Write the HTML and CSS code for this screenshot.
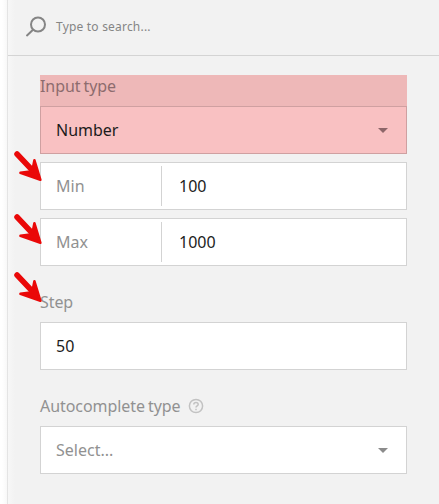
FILE: index.html
```
<!DOCTYPE html>
<html lang="en">
<head>
<meta charset="utf-8">
<title>Input settings</title>
<link rel="stylesheet" href="styles.css">
</head>
<body>
<main class="panel">
  <header class="search">
    <svg class="search-icon" width="22" height="22" viewBox="0 0 22 22"><circle cx="13" cy="8.5" r="7"/><path d="M8 13.7L2 19.4"/></svg>
    <span class="search-text">Type to search...</span>
  </header>
  <form class="fields">
    <section class="highlight">
      <div class="label">Input type</div>
      <div class="box select"><span>Number</span><i class="caret"></i></div>
    </section>
    <div class="box pair">
      <span class="name">Min</span><span class="value">100</span>
      <svg class="arrow" width="30" height="34" viewBox="0 0 30 34"><use href="#arrow"/></svg>
    </div>
    <div class="box pair">
      <span class="name">Max</span><span class="value">1000</span>
      <svg class="arrow arrow-low" width="30" height="34" viewBox="0 0 30 34"><use href="#arrow"/></svg>
    </div>
    <section class="group">
      <div class="label">Step
        <svg class="arrow arrow-label" width="30" height="34" viewBox="0 0 30 34"><use href="#arrow"/></svg>
      </div>
      <div class="box">50</div>
    </section>
    <section class="group">
      <div class="label">Autocomplete type
        <svg class="help" width="16" height="16" viewBox="0 0 16 16"><circle cx="8" cy="8" r="6.6"/><path d="M5.8 6.5C5.8 3.7 10.2 3.7 10.2 6.4C10.2 7.9 8 7.8 8 9.6M8 10.8V12.2"/></svg>
      </div>
      <div class="box select empty"><span>Select...</span><i class="caret"></i></div>
    </section>
  </form>
</main>
<svg class="defs" width="0" height="0"><defs><g id="arrow"><path class="shaft" d="M4 4L20.5 21.5"/><path class="head" d="M21.4 10.2L27.4 29.8L7.4 22.8L19.2 21.2Z"/></g></defs></svg>
</body>
</html>
```
FILE: styles.css
```
* { box-sizing: border-box; }
body {
  margin: 0;
  height: 504px;
  overflow: hidden;
  padding-left: 7px;
  background: linear-gradient(to right, #fff 2px, #f8f8f8 7px);
  font: 16px/24px "Noto Sans", "Open Sans", sans-serif;
  color: #1c1c1c;
}
.panel {
  height: 504px;
  border-left: 1px solid #e4e4e4;
  background: linear-gradient(to right, #f7f7f7, #f2f2f2 7px);
}
.search {
  display: flex;
  align-items: center;
  height: 56px;
  padding: 0 0 2px 17px;
  border-bottom: 1px solid #d4d4d4;
}
.search-icon { fill: none; stroke: #858585; stroke-width: 2; stroke-linecap: round; }
.search-text { margin-left: 9px; font-size: 12px; letter-spacing: .2px; color: #858585; }
.fields { width: 399px; padding: 19px 0 0 32px; }
.label { position: relative; display: flex; align-items: center; height: 32px; word-spacing: -1px; letter-spacing: -.07px; color: #919191; }
.highlight { margin-bottom: 8px; }
.highlight .label { height: 31px; padding-bottom: 9px; background: #eeb8b8; color: #8d6c6e; }
.box {
  position: relative;
  display: flex;
  align-items: center;
  height: 48px;
  padding: 0 15px;
  border: 1px solid #d3d3d3;
  background: #fff;
}
.highlight .box { background: #f9c1c2; border-color: #cfa0a1; }
.select { justify-content: space-between; padding-right: 18px; }
.caret { border: 5px solid transparent; border-top-color: #8b8b8b; border-bottom: 0; }
.highlight .caret { border-top-color: #8d6669; }
.pair { margin-bottom: 8px; }
.name { width: 106px; height: 40px; line-height: 40px; border-right: 1px solid #d3d3d3; color: #919191; }
.value { margin-left: 17px; }
.group { margin-top: 24px; }
.group .label { padding-bottom: 8px; }
.empty { color: #919191; }
.help { margin-left: 8px; fill: none; stroke: #c2c2c2; stroke-width: 1.5; }
.arrow { position: absolute; left: -28px; top: -13px; }
.arrow-low { top: -6px; }
.arrow-label { left: -27px; top: -19px; }
.shaft { fill: none; stroke: #ea0808; stroke-width: 5.5; stroke-linecap: round; }
.head { fill: #ea0808; stroke: #ea0808; stroke-width: 2.5; stroke-linejoin: round; }
.defs { position: absolute; }
```
